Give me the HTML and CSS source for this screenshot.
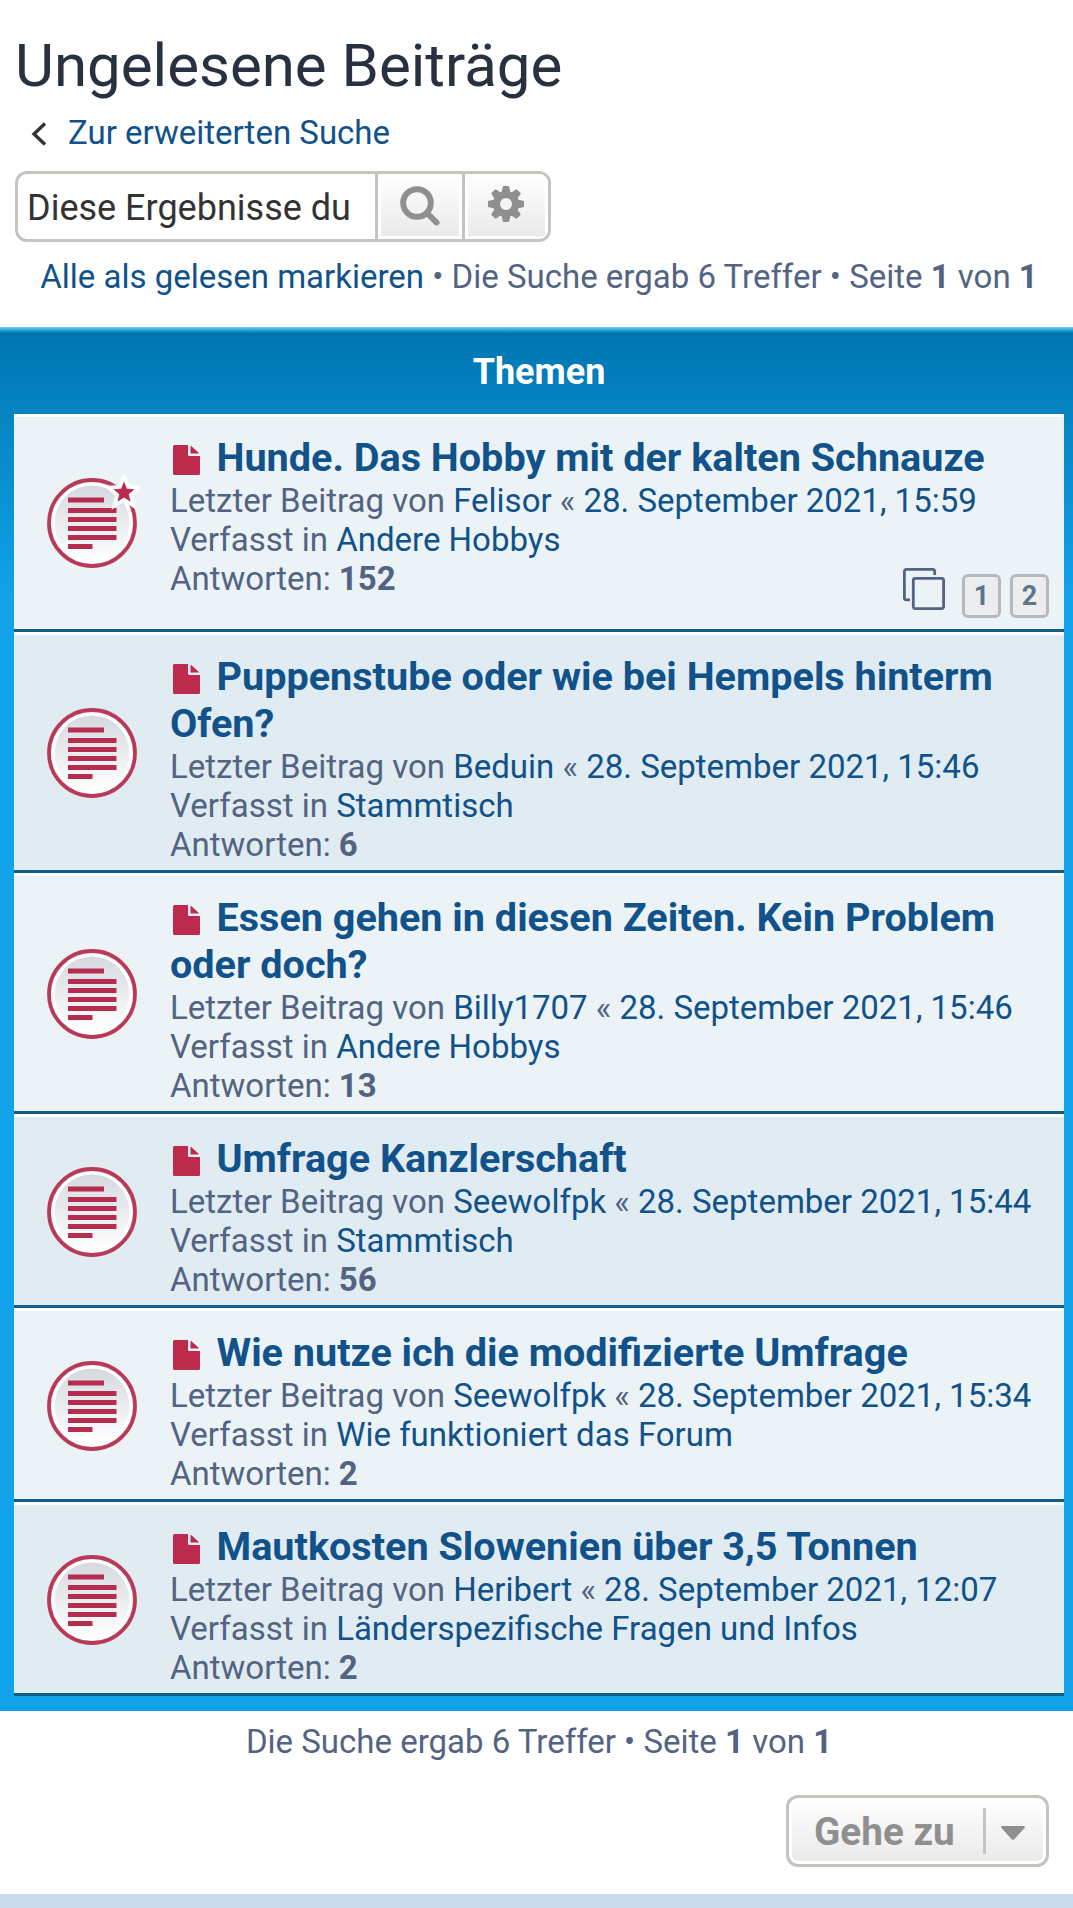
FILE: index.html
```html
<!DOCTYPE html>
<html lang="de">
<head>
<meta charset="utf-8">
<title>Ungelesene Beiträge</title>
<link rel="stylesheet" href="styles.css">
</head>
<body>
<svg class="defs" width="0" height="0" aria-hidden="true">
  <defs>
    <linearGradient id="disc" x1="0" y1="0" x2="0" y2="1"><stop offset="0" stop-color="#d5d9df"/><stop offset="1" stop-color="#ffffff"/></linearGradient>
    <symbol id="topic" viewBox="0 0 96 96">
      <circle cx="48" cy="48" r="43" fill="#fff" stroke="#b93a58" stroke-width="3.800"/>
      <circle cx="48" cy="48" r="37.500" fill="url(#disc)"/>
      <path fill="#b52d4f" d="M24 22.500h36v5H24zM24 33h48.500v5H24zM24 42h48.500v5H24zM24 51h48.500v5H24zM24 60h48.500v5H24zM24 69h24.500v5H24z"/>
    </symbol>
    <symbol id="file" viewBox="0 0 27 30">
      <path fill="#bc2a4d" d="M1.500 0H15v9.500q0 1.500 1.500 1.500H27v17.500q0 1.500-1.500 1.500h-24Q0 30 0 28.500v-27Q0 0 1.500 0zM17.500 0.800q1 .3 1.800 1.200l5.500 5q.8.800 1 1.500h-8.300z"/>
    </symbol>
  </defs>
</svg>
<main class="page">
  <h1 class="title">Ungelesene Beiträge</h1>
  <p class="back"><svg class="chevron" viewBox="0 0 16 24"><path d="M14 1.500 3 12l11 10.500" fill="none" stroke="#333" stroke-width="3.400"/></svg><a href="#">Zur erweiterten Suche</a></p>
  <div class="search">
    <div class="search-text">Diese Ergebnisse du</div>
    <button class="search-btn" aria-label="Suche"><svg width="40" height="40" viewBox="0 0 40 40"><circle cx="17" cy="17" r="13.800" fill="none" stroke="#8f8f8f" stroke-width="6"/><path d="m27 27 9.500 9.500" stroke="#8f8f8f" stroke-width="6" stroke-linecap="round"/></svg></button>
    <button class="search-btn last" aria-label="Erweiterte Suche"><svg width="36" height="36" viewBox="-18 -18 36 36"><g fill="#8f8f8f"><path id="tooth" d="M-4.500-11-3.200-17.300q.2-.7 1-.7h4.400q.8 0 1 .7L4.500-11V11L3.200 17.300q-.2.700-1 .7h-4.400q-.8 0-1-.7L-4.500 11z"/><use href="#tooth" transform="rotate(45)"/><use href="#tooth" transform="rotate(90)"/><use href="#tooth" transform="rotate(135)"/><circle r="13"/></g><circle r="6" fill="#f5f5f5"/></svg></button>
  </div>
  <p class="summary top"><a href="#">Alle als gelesen markieren</a> • Die Suche ergab 6 Treffer • Seite <b>1</b> von <b>1</b></p>
</main>

<section class="panel">
  <h2 class="panel-head">Themen</h2>
  <ul class="topics">
    <li class="row light paged">
      <svg class="status" viewBox="0 0 96 96"><use href="#topic"/><path d="M80 6.500 82.900 13.700 90.600 14.200 84.700 19.200 86.600 26.700 80 22.600 73.400 26.700 75.300 19.200 69.400 14.200 77.100 13.700z" fill="#bc2a4d" stroke="#fff" stroke-width="7.500" paint-order="stroke"/></svg>
      <div class="info">
        <h3><svg class="file"><use href="#file"/></svg><a href="#">Hunde. Das Hobby mit der kalten Schnauze</a></h3>
        <p>Letzter Beitrag von <a href="#">Felisor</a> « <a href="#">28. September 2021, 15:59</a></p>
        <p>Verfasst in <a href="#">Andere Hobbys</a></p>
        <p>Antworten: <b>152</b></p>
      </div>
      <div class="pager"><svg width="42" height="42" viewBox="0 0 42 42" fill="none" stroke="#536482" stroke-width="2.800"><rect x="10.300" y="10.300" width="30.300" height="30.300" rx="2"/><path d="M31.700 7V3.400q0-2-2-2H3.400q-2 0-2 2v26.400q0 2 2 2H7"/></svg><span class="num first">1</span><span class="num">2</span></div>
    </li>
    <li class="row dark">
      <svg class="status"><use href="#topic"/></svg>
      <div class="info">
        <h3><svg class="file"><use href="#file"/></svg><a href="#">Puppenstube oder wie bei Hempels hinterm<br>Ofen?</a></h3>
        <p>Letzter Beitrag von <a href="#">Beduin</a> « <a href="#">28. September 2021, 15:46</a></p>
        <p>Verfasst in <a href="#">Stammtisch</a></p>
        <p>Antworten: <b>6</b></p>
      </div>
    </li>
    <li class="row light">
      <svg class="status"><use href="#topic"/></svg>
      <div class="info">
        <h3><svg class="file"><use href="#file"/></svg><a href="#">Essen gehen in diesen Zeiten. Kein Problem<br>oder doch?</a></h3>
        <p>Letzter Beitrag von <a href="#">Billy1707</a> « <a href="#">28. September 2021, 15:46</a></p>
        <p>Verfasst in <a href="#">Andere Hobbys</a></p>
        <p>Antworten: <b>13</b></p>
      </div>
    </li>
    <li class="row dark">
      <svg class="status"><use href="#topic"/></svg>
      <div class="info">
        <h3><svg class="file"><use href="#file"/></svg><a href="#">Umfrage Kanzlerschaft</a></h3>
        <p>Letzter Beitrag von <a href="#">Seewolfpk</a> « <a href="#">28. September 2021, 15:44</a></p>
        <p>Verfasst in <a href="#">Stammtisch</a></p>
        <p>Antworten: <b>56</b></p>
      </div>
    </li>
    <li class="row light">
      <svg class="status"><use href="#topic"/></svg>
      <div class="info">
        <h3><svg class="file"><use href="#file"/></svg><a href="#">Wie nutze ich die modifizierte Umfrage</a></h3>
        <p>Letzter Beitrag von <a href="#">Seewolfpk</a> « <a href="#">28. September 2021, 15:34</a></p>
        <p>Verfasst in <a href="#">Wie funktioniert das Forum</a></p>
        <p>Antworten: <b>2</b></p>
      </div>
    </li>
    <li class="row dark">
      <svg class="status"><use href="#topic"/></svg>
      <div class="info">
        <h3><svg class="file"><use href="#file"/></svg><a href="#">Mautkosten Slowenien über 3,5 Tonnen</a></h3>
        <p>Letzter Beitrag von <a href="#">Heribert</a> « <a href="#">28. September 2021, 12:07</a></p>
        <p>Verfasst in <a href="#">Länderspezifische Fragen und Infos</a></p>
        <p>Antworten: <b>2</b></p>
      </div>
    </li>
  </ul>
</section>

<footer class="bottom">
  <p class="summary">Die Suche ergab 6 Treffer • Seite <b>1</b> von <b>1</b></p>
  <button class="jump"><span class="jump-text">Gehe zu</span><span class="caret"><svg width="24" height="14" viewBox="0 0 24 14"><path d="M1 0h22q1.500.5.500 2L13.300 13.200q-1.300 1.200-2.600 0L.5 2Q-.5.500 1 0z" fill="#8f8f8f"/></svg></span></button>
</footer>
<div class="band"></div>
</body>
</html>
```

FILE: styles.css
```css
* { box-sizing: border-box; }
body {
  margin: 0;
  height: 1908px;
  overflow: hidden;
  display: flex;
  flex-direction: column;
  background: #fff;
  color: #536482;
  font: 33px/39px Roboto, sans-serif;
}
h1, h2, h3, p, ul { margin: 0; padding: 0; }
ul { list-style: none; }
a { color: #105289; text-decoration: none; }
button { font: inherit; padding: 0; margin: 0; }
svg { display: block; flex: none; }
.defs { position: absolute; }

.page { height: 327px; padding: 31px 15px 0; }
.title { font-size: 60px; line-height: 70px; font-weight: 400; color: #28313f; white-space: nowrap; }
.back { display: flex; align-items: center; margin-top: 12px; padding-left: 16px; }
.chevron { width: 16px; height: 24px; margin: 2px 21px 0 0; }

.search {
  display: flex;
  width: 536px;
  height: 71px;
  margin-top: 19px;
  border: 3px solid #c7c3bf;
  border-radius: 12px;
  overflow: hidden;
}
.search-text { width: 357px; padding: 1px 0 0 9px; font-size: 36px; line-height: 66px; color: #333; white-space: nowrap; }
.search-btn {
  width: 87px;
  display: flex;
  align-items: center;
  justify-content: center;
  border: 0;
  border-left: 3px solid #c7c3bf;
  background: linear-gradient(#fff, #e9e9e9);
  box-shadow: inset 0 0 0 3px #fff;
}
.search-btn svg { margin: -1px 0 0 -1px; }
.search-btn.last { width: 86px; }
.search-btn.last svg { margin-top: -5px; }

.summary { text-align: center; white-space: nowrap; }
.summary.top { margin-top: 15px; padding-left: 5px; }
.summary b { font-weight: 700; }

.panel {
  height: 1384px;
  padding: 0 9px 0 14px;
  background: linear-gradient(#6aceff 0, #0076b1 6px, #12a3eb 275px);
}
.panel-head { height: 87px; padding-top: 1px; font-size: 36px; line-height: 88px; font-weight: 700; color: #fff; text-align: center; }
.row {
  display: flex;
  align-items: center;
  position: relative;
  padding: 18px 0 6px 30px;
  border-top: 3px solid #fff;
  border-bottom: 3px solid #0f5f86;
}
.light { background: #ecf3f7; }
.dark { background: #e1ebf2; }
.paged { padding-top: 17px; padding-bottom: 30.5px; }
.status { width: 96px; height: 96px; margin: -12px 30px -12px 0; }
.row .status { position: relative; top: -5px; }
.paged .status { top: 7px; }
.info { white-space: nowrap; }
.info h3 { font-size: 39.6px; line-height: 47px; font-weight: 700; }
.file { display: inline-block; width: 27px; height: 30px; margin: 0 16.5px 0 3px; vertical-align: -4px; }
.pager {
  position: absolute;
  right: 15px;
  bottom: 11px;
  display: flex;
  align-items: flex-start;
  gap: 9px;
}
.num {
  width: 39px;
  height: 44px;
  margin-top: 6px;
  border: 3px solid #b4bac0;
  border-radius: 6px;
  background: #ecedee;
  color: #5c758c;
  font-size: 27px;
  line-height: 38px;
  font-weight: 700;
  text-align: center;
}
.num.first { margin-left: 8px; }

.bottom { display: flex; flex-direction: column; height: 183px; padding: 11px 24px 0 15px; }
.bottom .summary { padding-left: 14px; }
.jump {
  align-self: flex-end;
  display: flex;
  align-items: center;
  width: 263px;
  height: 72px;
  margin-top: 34px;
  padding-left: 25px;
  border: 3px solid #c7c3bf;
  border-radius: 12px;
  background: linear-gradient(#fff, #e9e9e9);
  box-shadow: inset 0 0 0 3px #fff;
  color: #8f8f8f;
  font-size: 38.7px;
  font-weight: 700;
}
.jump-text { width: 169px; text-align: left; white-space: nowrap; }
.caret { display: flex; align-items: center; height: 46px; padding: 4px 0 0 15px; border-left: 3px solid #c7c3bf; }
.band { height: 14px; background: #cadceb; }
```
